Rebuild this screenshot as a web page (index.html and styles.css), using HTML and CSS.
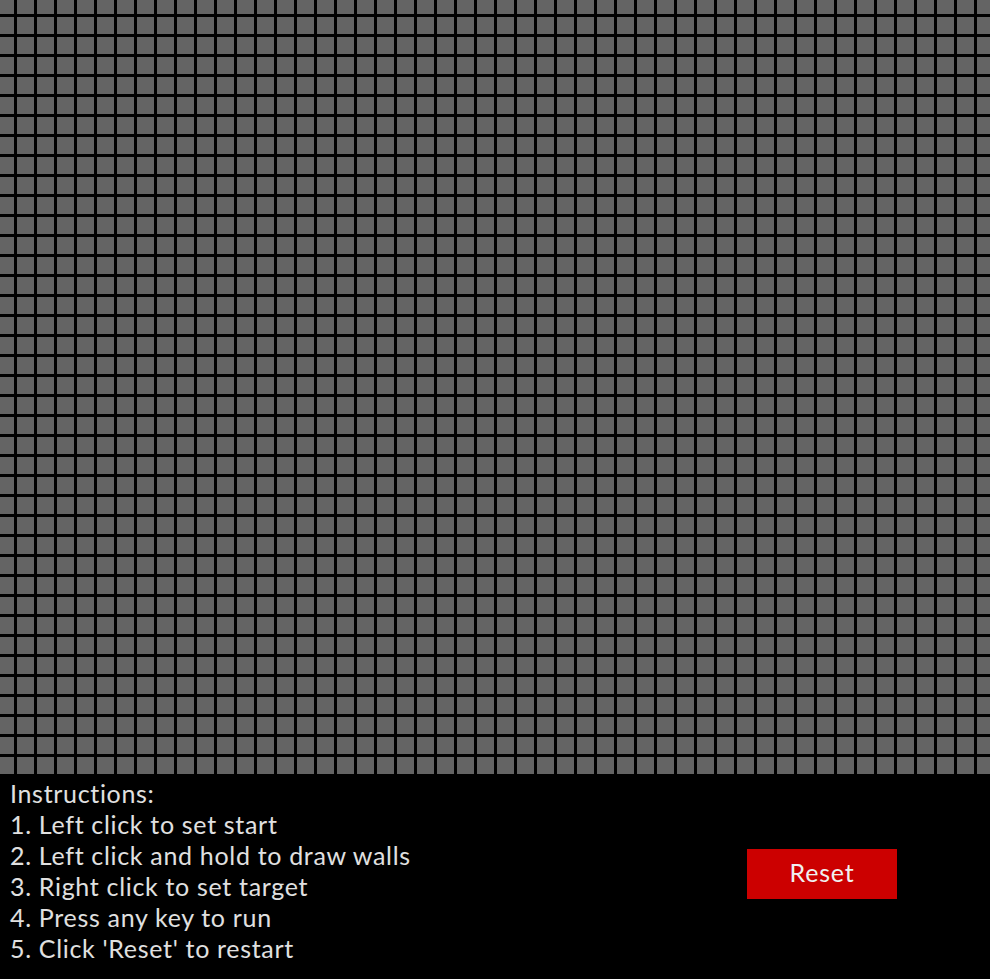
FILE: index.html
```html
<!DOCTYPE html>
<html lang="en">
<head>
<meta charset="utf-8">
<title>Pathfinding Visualizer</title>
<link rel="stylesheet" href="styles.css">
</head>
<body>
<div class="grid"></div>
<div class="panel">
  <div class="instructions">
    <div>Instructions:</div>
    <div>1. Left click to set start</div>
    <div>2. Left click and hold to draw walls</div>
    <div>3. Right click to set target</div>
    <div>4. Press any key to run</div>
    <div>5. Click 'Reset' to restart</div>
  </div>
  <button class="reset">Reset</button>
</div>
</body>
</html>
```
FILE: styles.css
```css
html, body {
  margin: 0;
  padding: 0;
  background: #000;
}
body {
  width: 990px;
  height: 979px;
  overflow: hidden;
  font-family: Lato, "Open Sans", sans-serif;
}
.grid {
  height: 774px;
  background-color: #646464;
  background-image:
    linear-gradient(to right, #000 3px, transparent 3px),
    linear-gradient(to bottom, #000 3px, transparent 3px);
  background-size: 20px 20px;
  background-position: 14px 14px;
}
.panel {
  height: 205px;
  display: flex;
  align-items: center;
  justify-content: space-between;
  padding: 0 93px 0 10px;
  box-sizing: border-box;
}
.instructions {
  color: #e0e0e0;
  font-size: 25px;
  line-height: 31px;
  letter-spacing: 0.68px;
  align-self: flex-start;
  padding-top: 4px;
}
.reset {
  width: 150px;
  height: 50px;
  background: #cc0000;
  color: #f0f0f0;
  border: none;
  font-family: Lato, "Open Sans", sans-serif;
  font-size: 25px;
  letter-spacing: 0.8px;
  padding: 0 0 5px 0;
  margin-top: -5px;
}
```
